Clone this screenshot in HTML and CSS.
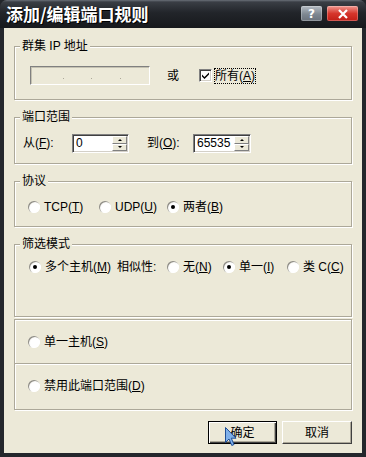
FILE: index.html
```html
<!DOCTYPE html>
<html lang="zh-CN">
<head>
  <meta charset="UTF-8">
  <meta name="viewport" content="width=device-width, initial-scale=1.0">
  <title>添加/编辑端口规则</title>
  <link rel="stylesheet" href="styles.css">
</head>
<body>

  <div class="window">
    <div class="titlebar">
      <span class="title">添加/编辑端口规则</span>
      <div class="caption-buttons">
        <span class="cap-btn cap-help">?</span>
        <span class="cap-btn cap-close">
          <svg width="12" height="10" viewBox="0 0 12 10"><path d="M2 1 L10 9 M10 1 L2 9" stroke="#fff" stroke-width="2.2" fill="none"/></svg>
        </span>
      </div>
    </div>

    <div class="client">

      <!-- cluster ip -->
      <div class="group group-ip">
        <div class="group-title">群集 IP 地址</div>
        <div class="row row-ip">
          <div class="ip-box"><i></i><i></i><i></i></div>
          <span class="or">或</span>
          <span class="check">
            <svg width="9" height="9" viewBox="0 0 9 9"><path d="M1 3.5 L3.5 6 L8 1.5 L8 3.5 L3.5 8 L1 5.5 Z" fill="#000"/></svg>
          </span>
          <span class="focus">所有(<u>A</u>)</span>
        </div>
      </div>

      <!-- port range -->
      <div class="group group-ports">
        <div class="group-title">端口范围</div>
        <div class="row row-ports">
          <span class="field-label label-from">从(<u>F</u>):</span>
          <div class="spin spin-from">
            <span class="spin-value">0</span>
            <div class="spin-buttons">
              <span class="spin-btn"><i class="arrow-up"></i></span>
              <span class="spin-btn"><i class="arrow-down"></i></span>
            </div>
          </div>
          <span class="field-label label-to">到(<u>O</u>):</span>
          <div class="spin spin-to">
            <span class="spin-value">65535</span>
            <div class="spin-buttons">
              <span class="spin-btn"><i class="arrow-up"></i></span>
              <span class="spin-btn"><i class="arrow-down"></i></span>
            </div>
          </div>
        </div>
      </div>

      <!-- protocol -->
      <div class="group group-proto">
        <div class="group-title">协议</div>
        <div class="row row-radios">
          <label class="option opt-tcp"><span class="radio"></span><span>TCP(<u>T</u>)</span></label>
          <label class="option opt-udp"><span class="radio"></span><span>UDP(<u>U</u>)</span></label>
          <label class="option"><span class="radio checked"></span><span>两者(<u>B</u>)</span></label>
        </div>
      </div>

      <!-- filter mode -->
      <div class="group group-filter">
        <div class="group-title">筛选模式</div>
        <div class="row row-filter">
          <label class="option opt-multi"><span class="radio checked"></span><span>多个主机(<u>M</u>)</span></label>
          <span class="affinity">相似性:</span>
          <label class="option opt-none"><span class="radio"></span><span>无(<u>N</u>)</span></label>
          <label class="option opt-single"><span class="radio checked"></span><span>单一(<u>I</u>)</span></label>
          <label class="option"><span class="radio"></span><span>类 C(<u>C</u>)</span></label>
        </div>
      </div>

      <div class="group box-single">
        <div class="row row-box">
          <label class="option"><span class="radio"></span><span>单一主机(<u>S</u>)</span></label>
        </div>
      </div>

      <div class="group box-disable">
        <div class="row row-box">
          <label class="option"><span class="radio"></span><span>禁用此端口范围(<u>D</u>)</span></label>
        </div>
      </div>

      <div class="buttons">
        <button class="btn btn-default">确定</button>
        <button class="btn btn-cancel">取消</button>
      </div>
    </div>

    <svg class="cursor" width="13" height="20" viewBox="0 0 13 20">
      <path d="M0.5 0.5 L0.5 15.5 L4 12 L6.8 18.5 L9 17.5 L6.3 11.2 L11 11.2 Z" fill="#7fb0ea" stroke="#1f4f96" stroke-width="1"/>
    </svg>
  </div>

</body>
</html>
```

FILE: styles.css
```css
* {
  margin: 0;
  padding: 0;

  box-sizing: border-box;
}

body {
  background: #23262b;
  font-family: 'Liberation Sans', 'Noto Sans CJK SC', sans-serif;
  font-size: 12px;
  color: #000;
}

.window {
  position: relative;
  display: flex;
  flex-direction: column;

  width: 366px;
  height: 457px;

  background: #24272c;
  border-radius: 7px 7px 0 0;
  overflow: hidden;
}

/* Title bar */

.titlebar {
  display: flex;
  align-items: center;
  justify-content: space-between;

  height: 28px;
  flex-shrink: 0;
  padding: 0 8px 0 6px;

  background: linear-gradient(to bottom, #6a7078 0, #3a3e45 2px, #22252a 45%, #17191c 100%);
}

.title {
  color: #fff;
  font-family: 'Noto Sans CJK SC', sans-serif;
  font-size: 17px;
  font-weight: 700;
  line-height: 24px;
  text-shadow: 1px 1px 0 #000;
}

.caption-buttons {
  display: flex;
  gap: 5px;
  margin-top: -1px;
}

.cap-btn {
  display: flex;
  align-items: center;
  justify-content: center;

  height: 15px;
  border-radius: 2px;

  color: #fff;
  font-family: 'DejaVu Sans', sans-serif;
  font-size: 12px;
  font-weight: 700;
}

.cap-help {
  width: 21px;
  background: linear-gradient(to bottom, #b5bcc4, #7e8791 55%, #6a727c);
  box-shadow: inset 0 0 0 1px rgba(255, 255, 255, 0.25);
}

.cap-close {
  width: 31px;
  background: linear-gradient(to bottom, #f19890, #d6362c 50%, #c21e16);
  box-shadow: inset 0 0 0 1px rgba(255, 255, 255, 0.25);
}

/* Client */

.client {
  flex: 1;
  margin: 0 4px 4px;
  padding: 18px 10px 0;

  background: #ece9d8;
}

.group {
  display: flow-root;
  height: 54px;
  margin-bottom: 17px;

  border: 1px solid #aca899;
  box-shadow: 1px 1px 0 #fff, inset 1px 1px 0 #fff;
}

.group-title {
  display: table;
  height: 12px;
  margin: -7px 0 0 5px;
  padding: 0 2px;

  background: #ece9d8;
  line-height: 12px;
}

.group-ports  { height: 47px; }
.group-proto  { height: 46px; }
.group-filter { height: 73px; margin-bottom: 2px; }
.box-single   { height: 45px; margin-bottom: 0; }
.box-disable  { height: 46px; margin-bottom: 0; border-top: none; }

.row {
  display: flex;
  align-items: center;
  line-height: 14px;
}

.row-ip {
  height: 19px;
  margin-top: 14px;
  padding-left: 15px;
}

.row-ports {
  align-items: flex-start;
  height: 19px;
  margin-top: 11px;
  padding-left: 8px;
}

.row-radios {
  height: 12px;
  margin-top: 14px;
  padding-left: 13px;
}

.row-filter {
  height: 12px;
  margin-top: 11px;
  padding-left: 14px;
}

.row-box {
  height: 12px;
  margin-top: 16px;
  padding-left: 13px;
}

/* ip address box (disabled) */

.ip-box {
  display: flex;
  justify-content: space-around;
  align-items: flex-end;

  width: 120px;
  height: 19px;
  padding: 0 14px 5px 18px;

  border: 1px solid;
  border-color: #808080 #fff #fff #808080;
  box-shadow: inset 1px 1px 0 #c5c2b2;
}

.ip-box i {
  width: 1px;
  height: 1px;
  background: #aca899;
}

.or {
  margin-left: 17px;
}

.check {
  display: flex;
  align-items: center;
  justify-content: center;

  width: 13px;
  height: 13px;
  margin-left: 20px;

  background: #fff;
  border: 1px solid;
  border-color: #808080 #fff #fff #808080;
  box-shadow: inset 1px 1px 0 #404040, inset -1px -1px 0 #d4d0c8;
}

.focus {
  margin-left: 2px;
  padding: 1px 1px 0;
  outline: 1px dotted #000;
  outline-offset: -1px;
  line-height: 15px;
}

/* spin fields */

.field-label {
  line-height: 16px;
  margin-top: 1px;
}

.label-from { width: 49px; }
.label-to   { width: 46px; margin-left: 18px; }

.spin {
  display: flex;
  width: 57px;
  height: 19px;

  background: #fff;
  border: 1px solid;
  border-color: #808080 #fff #fff #808080;
  box-shadow: inset 1px 1px 0 #404040, inset -1px -1px 0 #d4d0c8;
}

.spin-to { width: 58px; }

.spin-value {
  flex: 1;
  padding: 2px 0 0 3px;
  line-height: 13px;
}

.spin-buttons {
  display: flex;
  flex-direction: column;
  width: 16px;
  padding: 1px 1px 1px 0;
}

.spin-btn {
  display: flex;
  align-items: center;
  justify-content: center;
  flex: 1;

  background: #ece9d8;
  border: 1px solid;
  border-color: #fff #808080 #808080 #fff;
}

.arrow-up,
.arrow-down {
  width: 0;
  height: 0;
  border-left: 2px solid transparent;
  border-right: 2px solid transparent;
}

.arrow-up   { border-bottom: 2px solid #000; }
.arrow-down { border-top: 2px solid #000; }

/* radios */

.option {
  display: flex;
  align-items: center;
  gap: 4px;
  white-space: nowrap;
}

.opt-tcp    { width: 71px; }
.opt-udp    { width: 68px; }
.opt-multi  { width: 88px; }
.affinity   { width: 50px; }
.opt-none   { width: 56px; }
.opt-single { width: 64px; }

.radio {
  display: flex;
  align-items: center;
  justify-content: center;

  width: 12px;
  height: 12px;
  flex-shrink: 0;

  border-radius: 50%;
  background: radial-gradient(circle at 60% 60%, #fff 45%, #e4e2da 100%);
  box-shadow: inset 1px 1px 0 #8e8c84, inset -1px -1px 0 #fff;
}

.radio.checked::after {
  content: '';
  width: 4px;
  height: 4px;
  border-radius: 50%;
  background: #000;
}

/* dialog buttons */

.buttons {
  display: flex;
  justify-content: flex-end;
  gap: 5px;

  margin-top: 11px;
}

.btn {
  width: 69px;
  height: 23px;

  background: #ece9d8;
  border: 1px solid;
  border-color: #fff #404040 #404040 #fff;
  box-shadow: inset -1px -1px 0 #aca899;

  font-family: inherit;
  font-size: 12px;
  line-height: 14px;
  color: #000;
}

.btn-default {
  border: 1px solid #000;
  box-shadow: inset 1px 1px 0 #fff, inset -1px -1px 0 #404040, inset -2px -2px 0 #aca899;
}

.btn-cancel { width: 70px; }

.cursor {
  position: absolute;
  left: 225px;
  top: 427px;
}
```
